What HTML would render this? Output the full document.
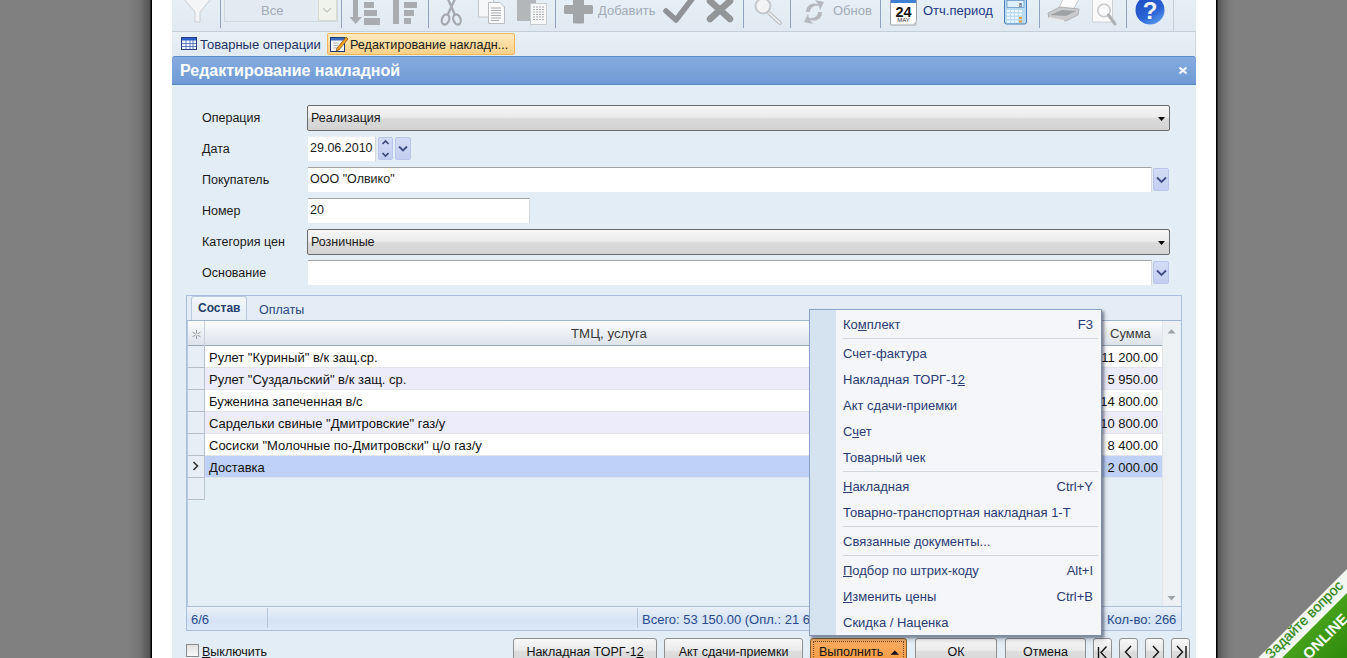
<!DOCTYPE html>
<html><head><meta charset="utf-8">
<style>
*{box-sizing:border-box;margin:0;padding:0}
html,body{width:1347px;height:658px;overflow:hidden;background:#808080;font-family:"Liberation Sans",sans-serif;}
.a{position:absolute}
.t{position:absolute;white-space:nowrap;line-height:1}
#shL{left:0;top:0;width:152px;height:658px;background:linear-gradient(to right,#808080 0,#808080 128px,#737373 140px,#525252 150px,#000 151px)}
#shR{left:1216px;top:0;width:131px;height:658px;background:linear-gradient(to right,#000 0,#000 1px,#565656 2px,#6b6b6b 7px,#7a7a7a 13px,#808080 18px)}
#frame{left:152px;top:0;width:1064px;height:658px;background:#fff}
#app{left:172px;top:0;width:1024px;height:658px;background:#e3edf6;overflow:hidden}
/* toolbar */
#tb{left:172px;top:0;width:1024px;height:32px;background:linear-gradient(#e7eff6,#e0e9f1);border-bottom:1px solid #c5cfd9}
.sep{position:absolute;top:0;width:1px;height:28px;background:#8fa3bf}
.dis{color:#a3abb6;font-size:13px}
#tabs{left:172px;top:32px;width:1024px;height:24px;background:linear-gradient(#e9f0f6,#e2eaf2);border-right:1px solid #cdd5dd}
#title{left:172px;top:56px;width:1024px;height:29px;background:linear-gradient(#85acdf,#6f9ad5);border-top:1px solid #5d8ac8;border-bottom:1px solid #5a86c1;border-radius:3px 3px 0 0}
#titlel{left:172px;top:85px;width:1024px;height:1px;background:#d9f3fb}
.lbl{font-size:12.5px;color:#1a1a1a}
.sel{position:absolute;border:1px solid #6b6b6b;border-radius:2px;background:linear-gradient(#f6f6f6 0,#ececec 45%,#d9d9d9 55%,#d4d4d4 100%)}
.inp{position:absolute;background:#fff;border-top:1px solid #a3a3a3;border-right:1px solid #d3d8dd}
.ddb{position:absolute;border:1px solid #b9c5ea;border-radius:2px;background:linear-gradient(#d4ddf6,#c2cdf0)}
.row{position:absolute;left:205px;width:957px;height:22px;border-bottom:1px solid #e2e4ea}
.rh{position:absolute;left:188px;width:17px;height:22px;background:#e8eef5;border-right:1px solid #b9c1cc;border-bottom:1px solid #b4bcc8}
.cell{font-size:13px;color:#111}
.mi{position:absolute;left:843px;font-size:13px;color:#2b3b74}
.mk{position:absolute;font-size:13px;color:#2b3b74;right:0}
.msep{position:absolute;left:843px;width:255px;height:1px;background:#d2d7de}
.btn{position:absolute;top:638px;height:26px;border:1px solid #8e8f8f;border-radius:3px;background:linear-gradient(#f8f8f8,#e9e9e9 50%,#dedede 51%,#d6d6d6);font-size:12.5px;color:#111;text-align:center}
</style></head>
<body>
<div id="shL" class="a"></div>
<div id="shR" class="a"></div>
<div id="frame" class="a"></div>
<div id="app" class="a"></div>

<!-- toolbar -->
<div id="tb" class="a"></div>
<div class="sep" style="left:220px"></div>
<div class="sep" style="left:341px"></div>
<div class="sep" style="left:428px"></div>
<div class="sep" style="left:555px"></div>
<div class="sep" style="left:743px"></div>
<div class="sep" style="left:790px"></div>
<div class="sep" style="left:880px"></div>
<div class="sep" style="left:1039px"></div>
<div class="sep" style="left:1126px"></div>
<div class="a" style="left:1173px;top:0;width:1px;height:31px;background:#c5cfd9"></div>

<!-- combo Все -->
<div class="a" style="left:224px;top:-2px;width:114px;height:24px;border:1px solid #d0d8e0;background:#e3eaf1"></div>
<div class="t dis" style="left:261px;top:4px;font-size:13px">Все</div>
<div class="a" style="left:318px;top:-1px;width:19px;height:22px;background:#f0f3ec;border:1px solid #d5dccf"></div>

<svg class="a" style="left:0;top:0" width="1347" height="32" viewBox="0 0 1347 32">
<defs>
<linearGradient id="hg" x1="0.2" y1="0" x2="0.8" y2="1"><stop offset="0" stop-color="#1f4cc2"/><stop offset="0.6" stop-color="#2a62d4"/><stop offset="1" stop-color="#5a9ef0"/></linearGradient>
</defs>
<!-- funnel -->
<path d="M184,-1 L211,-1 L200,12 L200,22 L195,22 L195,12 Z" fill="#f4f5f7" stroke="#c9ccd0" stroke-width="1"/>
<!-- combo chevron -->
<path d="M323,8 L327,12 L331,8" fill="none" stroke="#c8ccc0" stroke-width="1.5"/>
<!-- sort desc -->
<rect x="353" y="0" width="5" height="17" fill="#a9adb1"/>
<path d="M349.5,17 L362,17 L355.7,24 Z" fill="#a9adb1"/>
<rect x="364" y="2" width="10" height="6" fill="#a9adb1"/>
<rect x="364" y="10" width="13" height="6" fill="#a9adb1"/>
<rect x="364" y="18" width="16" height="7" fill="#a9adb1"/>
<!-- sort asc -->
<rect x="393" y="0" width="6" height="24" fill="#a9adb1"/>
<path d="M389,0 L403,0 L396,-5 Z" fill="#a9adb1"/>
<rect x="404" y="2" width="13" height="6" fill="#a9adb1"/>
<rect x="404" y="10" width="10" height="6" fill="#a9adb1"/>
<rect x="404" y="18" width="7" height="6" fill="#a9adb1"/>
<!-- scissors -->
<path d="M448,-1 L454.5,14 M455,-1 L448,14" stroke="#a8acb0" stroke-width="2.4" fill="none"/>
<ellipse cx="445.5" cy="19.5" rx="3.6" ry="5.2" transform="rotate(20 445.5 19.5)" fill="none" stroke="#a4a8ac" stroke-width="2.2"/>
<ellipse cx="457" cy="19.5" rx="3.6" ry="5.2" transform="rotate(-20 457 19.5)" fill="none" stroke="#a4a8ac" stroke-width="2.2"/>
<!-- copy -->
<rect x="478.5" y="-1" width="15" height="18" fill="#f6f7f8" stroke="#c6c9cc"/>
<path d="M488.5,2.5 L500,2.5 L504.5,7 L504.5,23.5 L488.5,23.5 Z" fill="#fbfbfc" stroke="#b9bcc0"/>
<path d="M491,8h10M491,10.5h10M491,13h10M491,15.5h10M491,18h10M491,20.5h8" stroke="#a8abaf" stroke-width="1"/>
<!-- paste -->
<rect x="517" y="-1" width="19" height="22" fill="#b4b7ba"/>
<rect x="530.5" y="3.5" width="16" height="21" fill="#f7f8f8" stroke="#c9cccf"/>
<path d="M533,7h11M533,9.5h11M533,12h11M533,14.5h11M533,17h11M533,19.5h11" stroke="#a8abaf" stroke-width="1" stroke-dasharray="2,1"/>
<!-- plus -->
<rect x="564" y="5" width="29" height="9" rx="1.5" fill="#a3a6a9"/>
<rect x="573" y="-2" width="11" height="25.5" rx="1" fill="#a3a6a9"/>
<!-- check -->
<path d="M666,11 L676,20 L692,-1" fill="none" stroke="#8f9296" stroke-width="5.5" stroke-linejoin="round" stroke-linecap="round"/>
<!-- X -->
<path d="M710,1 L730,19 M730,1 L710,19" stroke="#939699" stroke-width="6.5" stroke-linecap="round"/>
<!-- magnifier -->
<circle cx="763" cy="6" r="7.5" fill="#f1f3f5" stroke="#c4c8cc" stroke-width="2"/>
<path d="M769,13 L780,23" stroke="#c0c4c8" stroke-width="4" stroke-linecap="round"/>
<path d="M769,13 L780,23" stroke="#f1f3f5" stroke-width="1.5" stroke-linecap="round"/>
<!-- refresh -->
<path d="M806,12 C806,5 812,2 818,4 L815,0 L824,2 L820,10 L819,6 C814,5 810,8 810,12 Z" fill="#b5b9bd"/>
<path d="M822,12 C822,19 816,22 810,20 L813,24 L804,22 L808,14 L809,18 C814,19 818,16 818,12 Z" fill="#b5b9bd"/>
<!-- calendar -->
<rect x="890.5" y="-1" width="26" height="26" rx="1" fill="#fff" stroke="#9aa0a6"/>
<rect x="891" y="-1" width="25" height="4" fill="#3f7fd4"/>
<text x="903.5" y="16.5" font-family="Liberation Sans" font-weight="bold" font-size="14.5" text-anchor="middle" fill="#111">24</text>
<text x="903.5" y="22" font-family="Liberation Sans" font-size="6" text-anchor="middle" fill="#333">MAY</text>
<path d="M912,25 L917,20 L917,25 Z" fill="#c8ccd0"/>
<!-- calculator -->
<rect x="1004.5" y="-1" width="22" height="25" rx="2" fill="#b9dcf3" stroke="#4a7db5"/>
<rect x="1007" y="0.5" width="17" height="7" fill="#dff0fb" stroke="#5a8cc0" stroke-width="0.7"/>
<text x="1022" y="6.5" font-family="Liberation Sans" font-size="6" text-anchor="end" fill="#335">8</text>
<g fill="#eef7fd">
<rect x="1007" y="10" width="3" height="2"/><rect x="1011" y="10" width="3" height="2"/><rect x="1015" y="10" width="3" height="2"/><rect x="1019" y="10" width="3" height="2"/>
<rect x="1007" y="13.5" width="3" height="2"/><rect x="1011" y="13.5" width="3" height="2"/><rect x="1015" y="13.5" width="3" height="2"/><rect x="1019" y="13.5" width="3" height="2"/>
<rect x="1007" y="17" width="3" height="2"/><rect x="1011" y="17" width="3" height="2"/><rect x="1015" y="17" width="3" height="2"/><rect x="1019" y="17" width="3" height="2" fill="#f0a030"/>
<rect x="1007" y="20.5" width="3" height="2"/><rect x="1011" y="20.5" width="3" height="2"/><rect x="1015" y="20.5" width="3" height="2"/><rect x="1019" y="20.5" width="3" height="2" fill="#f0a030"/>
</g>
<!-- printer -->
<path d="M1058,10 L1063,-1 L1079,-1 L1073,10 Z" fill="#fbfbfb" stroke="#c9cbcd"/>
<path d="M1048,13 L1060,7 L1079,9 L1078,15 L1066,21 L1049,18 Z" fill="#c9cbcd" stroke="#b0b3b6"/>
<path d="M1050,15 L1062,10 L1076,11 L1066,16 Z" fill="#9fa2a5"/>
<path d="M1049,17 L1064,20 L1064,22 L1049,19 Z" fill="#e8e9ea"/>
<!-- preview -->
<rect x="1092.5" y="-1" width="20" height="23" fill="#fafafa" stroke="#cfd2d5"/>
<circle cx="1104" cy="10.5" r="6.2" fill="none" stroke="#c8cbce" stroke-width="1.6"/>
<path d="M1108.5,15 L1115,24" stroke="#adb1b4" stroke-width="3" stroke-linecap="round"/>
<!-- help -->
<circle cx="1150" cy="10" r="14.5" fill="url(#hg)"/>
<text x="1150" y="19" font-family="Liberation Sans" font-weight="bold" font-size="24" text-anchor="middle" fill="#eef2fb">?</text>
</svg>


<div class="t dis" style="left:598px;top:4px">Добавить</div>
<div class="t dis" style="left:833px;top:4px">Обнов</div>
<div class="t" style="left:923px;top:4px;font-size:13px;color:#22398a">Отч.период</div>


<!-- tabs bar -->
<div id="tabs" class="a"></div>
<div class="t" style="left:200px;top:38px;font-size:13px;color:#1f3366">Товарные операции</div>
<div class="a" style="left:327px;top:33px;width:188px;height:22px;border:1px solid #f0b558;border-radius:2px;background:linear-gradient(#fdebc0,#fcdca0 50%,#fbd28a)"></div>
<div class="t" style="left:350px;top:39px;font-size:12.6px;color:#1a1a1a">Редактирование накладн...</div>

<svg class="a" style="left:0;top:32px" width="600" height="24" viewBox="0 32 600 24">
<rect x="181.5" y="37.5" width="15" height="12" fill="#f4f7fb" stroke="#2a3a8a"/>
<rect x="182" y="38" width="14" height="2.5" fill="#2b5fc8"/>
<path d="M182,43.5h14M182,46.5h14M186,40v9M190,40v9M193,40v9" stroke="#4f6fb8" stroke-width="0.9"/>
<rect x="330.5" y="37.5" width="14" height="14" fill="#fdfdfd" stroke="#223a7a"/>
<rect x="331" y="38" width="13" height="2.5" fill="#3a6ac0"/>
<path d="M333,43h6M333,45.5h5M333,48h4" stroke="#9aa" stroke-width="0.8"/>
<path d="M337,48 L346,37 L348,39 L339,50 L336,51 Z" fill="#f0a020" stroke="#7a4a10" stroke-width="0.7"/>
</svg>
<!-- title -->
<div id="title" class="a"></div>
<div id="titlel" class="a"></div>
<div class="t" style="left:180px;top:63px;font-size:16px;font-weight:bold;color:#fff">Редактирование накладной</div>
<svg class="a" style="left:1176px;top:64px" width="14" height="12"><path d="M3.5,3.5 L10.5,9.5 M10.5,3.5 L3.5,9.5" stroke="#f4f8fc" stroke-width="2.3"/></svg>

<!-- form -->
<div class="t lbl" style="left:202px;top:112px">Операция</div>
<div class="t lbl" style="left:202px;top:143px">Дата</div>
<div class="t lbl" style="left:202px;top:174px">Покупатель</div>
<div class="t lbl" style="left:202px;top:205px">Номер</div>
<div class="t lbl" style="left:202px;top:236px">Категория цен</div>
<div class="t lbl" style="left:202px;top:267px">Основание</div>

<div class="sel" style="left:307px;top:105px;width:863px;height:26px"></div>
<div class="t lbl" style="left:311px;top:112px">Реализация</div>
<div class="inp" style="left:308px;top:136px;width:68px;height:25px;border-top-color:#e8eef4"></div>
<div class="t lbl" style="left:310px;top:142px">29.06.2010</div>
<div class="ddb" style="left:378px;top:137px;width:15px;height:23px"></div>
<div class="ddb" style="left:395px;top:137px;width:16px;height:23px"></div>
<div class="inp" style="left:308px;top:167px;width:844px;height:25px"></div>
<div class="t lbl" style="left:310px;top:173px">ООО "Олвико"</div>
<div class="ddb" style="left:1153px;top:168px;width:16px;height:23px"></div>
<div class="inp" style="left:308px;top:198px;width:222px;height:25px"></div>
<div class="t lbl" style="left:310px;top:204px">20</div>
<div class="sel" style="left:307px;top:229px;width:863px;height:26px"></div>
<div class="t lbl" style="left:311px;top:236px">Розничные</div>
<div class="inp" style="left:308px;top:260px;width:844px;height:25px"></div>
<div class="ddb" style="left:1153px;top:261px;width:16px;height:23px"></div>


<svg class="a" style="left:0;top:100px" width="1347" height="190" viewBox="0 100 1347 190">
<path d="M1158,117 L1165,117 L1161.5,121 Z" fill="#000"/>
<path d="M1158,241 L1165,241 L1161.5,245 Z" fill="#000"/>
<path d="M1157,177.5 L1161.5,182 L1166,177.5" fill="none" stroke="#414e82" stroke-width="1.8"/>
<path d="M1157,270.5 L1161.5,275 L1166,270.5" fill="none" stroke="#414e82" stroke-width="1.8"/>
<path d="M399,146.5 L403,150.5 L407,146.5" fill="none" stroke="#414e82" stroke-width="1.8"/>
<path d="M382.5,144 L385.5,141 L388.5,144" fill="none" stroke="#3a4677" stroke-width="1.6"/>
<path d="M382.5,153 L385.5,156 L388.5,153" fill="none" stroke="#3a4677" stroke-width="1.6"/>
</svg>

<!-- tab control -->
<div class="a" style="left:186px;top:295px;width:996px;height:336px;border:1px solid #a9bfdc;background:#e4edf6"></div>
<div class="a" style="left:191px;top:296px;width:56px;height:26px;border:1px solid #b9c9de;border-bottom:none;border-radius:3px 3px 0 0;background:linear-gradient(#f2f6fa,#e6edf5)"></div>
<div class="t" style="left:198px;top:302px;font-size:12px;font-weight:bold;color:#1f3e6e">Состав</div>
<div class="t" style="left:259px;top:304px;font-size:12.5px;color:#2c4a86">Оплаты</div>

<!-- grid -->
<div class="a" style="left:187px;top:320px;width:994px;height:287px;border-top:1px solid #9db4d4;border-left:1px solid #b4c8e0;background:#e4eef5"></div>
<div class="a" style="left:188px;top:321px;width:974px;height:25px;background:linear-gradient(#fbfcfd,#e9edf2 60%,#dde3ea);border-bottom:1px solid #9aa7b7"></div>
<div class="a" style="left:204px;top:321px;width:1px;height:25px;background:#c9d1dc"></div>
<svg class="a" style="left:191px;top:329px" width="11" height="11"><g stroke="#8a8e94" stroke-width="0.9"><path d="M5.5,1 V10 M1.5,3.2 L9.5,7.8 M1.5,7.8 L9.5,3.2"/></g><circle cx="5.5" cy="5.5" r="1.3" fill="#e8ecf0"/></svg>
<div class="t" style="left:571px;top:327px;font-size:13.3px;color:#3a3a3a">ТМЦ, услуга</div>
<div class="t" style="left:1110px;top:327px;font-size:13px;color:#3a3a3a">Сумма</div>
<div class="a" style="left:1162px;top:321px;width:18px;height:285px;background:#eef1f4;border-left:1px solid #e2e6ea"></div>

<svg class="a" style="left:1160px;top:320px" width="22" height="290" viewBox="1160 320 22 290"><path d="M1167.5,333.5 L1175.5,333.5 L1171.5,329 Z" fill="#9ea3a8"/><path d="M1167.5,596 L1175.5,596 L1171.5,600.5 Z" fill="#9ea3a8"/></svg>
<div class="rh" style="top:346px"></div>
<div class="row" style="top:346px;background:#ffffff"></div>
<div class="t cell" style="left:209px;top:351px">Рулет "Куриный" в/к защ.ср.</div>
<div class="t cell" style="right:189px;top:351px">11 200.00</div>
<div class="rh" style="top:368px"></div>
<div class="row" style="top:368px;background:#ececfa"></div>
<div class="t cell" style="left:209px;top:373px">Рулет "Суздальский" в/к защ. ср.</div>
<div class="t cell" style="right:189px;top:373px">5 950.00</div>
<div class="rh" style="top:390px"></div>
<div class="row" style="top:390px;background:#ffffff"></div>
<div class="t cell" style="left:209px;top:395px">Буженина запеченная в/с</div>
<div class="t cell" style="right:189px;top:395px">14 800.00</div>
<div class="rh" style="top:412px"></div>
<div class="row" style="top:412px;background:#ececfa"></div>
<div class="t cell" style="left:209px;top:417px">Сардельки свиные "Дмитровские" газ/у</div>
<div class="t cell" style="right:189px;top:417px">10 800.00</div>
<div class="rh" style="top:434px"></div>
<div class="row" style="top:434px;background:#ffffff"></div>
<div class="t cell" style="left:209px;top:439px">Сосиски "Молочные по-Дмитровски" ц/о газ/у</div>
<div class="t cell" style="right:189px;top:439px">8 400.00</div>
<div class="rh" style="top:456px"></div>
<div class="row" style="top:456px;background:#bfd1f6"></div>
<div class="t cell" style="left:209px;top:461px">Доставка</div>
<div class="t cell" style="right:189px;top:461px">2 000.00</div>
<div class="rh" style="top:478px"></div>
<svg class="a" style="left:192px;top:461px" width="8" height="10"><path d="M1.5,1 L5.5,5 L1.5,9" fill="none" stroke="#333" stroke-width="1.6"/></svg>

<div class="a" style="left:187px;top:606px;width:994px;height:24px;border-top:1px solid #a9bfdc;background:linear-gradient(#e9f0f8,#d5e3f4 60%,#dce8f6)"></div>
<div class="a" style="left:267px;top:608px;width:1px;height:20px;background:#b6c6da"></div>
<div class="a" style="left:637px;top:608px;width:1px;height:20px;background:#b6c6da"></div>
<div class="t" style="left:191px;top:613px;font-size:13px;color:#2a4a8e">6/6</div>
<div class="t" style="left:642px;top:613px;font-size:13px;color:#2a4a8e">Всего: 53 150.00 (Опл.: 21 6</div>
<div class="t" style="left:1107px;top:613px;font-size:13px;color:#2a4a8e">Кол-во: 266</div>
<!-- bottom -->
<div class="a" style="left:186px;top:644px;width:13px;height:13px;border:1px solid #8a8a8a;background:linear-gradient(#e0e0e0,#fafafa)"></div>
<div class="t" style="left:202px;top:646px;font-size:12.5px;color:#111"><u>В</u>ыключить</div>
<div class="btn" style="left:513px;width:144px"><span class="t" style="left:0;right:0;top:7px">Накладная ТОРГ-1<u>2</u></span></div>
<div class="btn" style="left:664px;width:139px"><span class="t" style="left:0;right:0;top:7px">Акт с<u>д</u>ачи-приемки</span></div>
<div class="btn" style="left:810px;width:97px;border-color:#7d6035;background:linear-gradient(#f9ad62,#f8a352 50%,#f79a42)"><div class="a" style="left:2px;top:2px;right:2px;bottom:0;border:1px dotted #6a4a20;border-bottom:none"></div><span class="t" style="left:8px;top:7px">Выполнить</span>
<svg class="a" style="left:79px;top:11px" width="10" height="6"><path d="M0.5,4.8 L9,4.8 L4.75,0.5 Z" fill="#111"/></svg></div>
<div class="btn" style="left:915px;width:82px"><span class="t" style="left:0;right:0;top:7px">ОК</span></div>
<div class="btn" style="left:1005px;width:81px"><span class="t" style="left:0;right:0;top:7px">Отмена</span></div>
<div class="btn" style="left:1093px;width:19px"></div>
<div class="btn" style="left:1119px;width:19px"></div>
<div class="btn" style="left:1145px;width:19px"></div>
<div class="btn" style="left:1171px;width:19px"></div>
<svg class="a" style="left:1085px;top:638px" width="115" height="20" viewBox="1085 638 115 20">
<g fill="none" stroke="#111" stroke-width="1.4">
<path d="M1098.5,647 V658 M1106.5,646.5 L1101,652.5 L1106.5,658.5"/>
<path d="M1131,646 L1125.5,652 L1131,658"/>
<path d="M1153,646 L1158.5,652 L1153,658"/>
<path d="M1177,646 L1182.5,652 L1177,658 M1186,646 V658"/>
</g></svg>
<div class="a" style="left:812px;top:312px;width:293px;height:328px;background:rgba(0,0,0,0.18);filter:blur(2px)"></div>
<div class="a" style="left:809px;top:309px;width:293px;height:327px;border:1px solid #8aa3c8;border-right-color:#7d8ea8;border-bottom-color:#7d8ea8;background:#f4f6f9;box-shadow:2px 2px 2px rgba(50,60,90,0.45)"></div>
<div class="a" style="left:810px;top:310px;width:26px;height:325px;background:#d5e2ef"></div>
<div class="t mi" style="top:318px">Ко<u>м</u>плект</div>
<div class="t mi" style="left:auto;right:254px;top:318px">F3</div>
<div class="msep" style="top:338px"></div>
<div class="t mi" style="top:347px">Счет-фактура</div>
<div class="t mi" style="top:373px">Накладная ТОРГ-1<u>2</u></div>
<div class="t mi" style="top:399px">Акт сдачи-приемки</div>
<div class="t mi" style="top:425px">С<u>ч</u>ет</div>
<div class="t mi" style="top:451px">Товарный чек</div>
<div class="msep" style="top:471px"></div>
<div class="t mi" style="top:480px"><u>Н</u>акладная</div>
<div class="t mi" style="left:auto;right:254px;top:480px">Ctrl+Y</div>
<div class="t mi" style="top:506px">Товарно-транспортная накладная 1-Т</div>
<div class="msep" style="top:526px"></div>
<div class="t mi" style="top:535px">Связанные документы...</div>
<div class="msep" style="top:555px"></div>
<div class="t mi" style="top:564px"><u>П</u>одбор по штрих-коду</div>
<div class="t mi" style="left:auto;right:254px;top:564px">Alt+I</div>
<div class="t mi" style="top:590px"><u>И</u>зменить цены</div>
<div class="t mi" style="left:auto;right:254px;top:590px">Ctrl+B</div>
<div class="t mi" style="top:616px">Скидка / Наценка</div>


<svg class="a" style="left:1240px;top:550px" width="107" height="108" viewBox="1240 550 107 108">
<defs><linearGradient id="gg" x1="0" y1="0" x2="1" y2="1"><stop offset="0" stop-color="#5cb525"/><stop offset="1" stop-color="#2e8a0c"/></linearGradient></defs>
<path d="M1258,658 L1347,569 L1347,658 Z" fill="#f4f8f2"/>
<path d="M1282,658 L1347,593 L1347,658 Z" fill="url(#gg)"/>
<text transform="translate(1307.5,623) rotate(-45)" text-anchor="middle" font-family="Liberation Sans" font-size="14" fill="#2f8516" stroke="#2f8516" stroke-width="0.25">Задайте вопрос</text>
<text transform="translate(1329,640) rotate(-45)" text-anchor="middle" font-family="Liberation Sans" font-weight="bold" font-size="15" fill="#fff">ONLINE</text>
</svg>
</body></html>
